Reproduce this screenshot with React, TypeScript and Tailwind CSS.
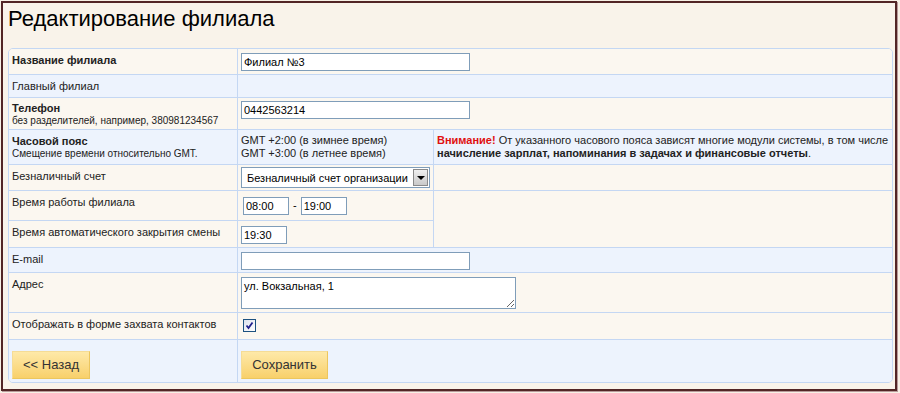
import React from 'react';

const inputCls =
  'h-[18px] border border-[#7f9db9] bg-white px-[2px] text-[11px] leading-[14px] text-black outline-none';

const Label = ({ children, bold }: { children: React.ReactNode; bold?: boolean }) => (
  <div className={bold ? 'font-bold' : ''}>{children}</div>
);

export default function App() {
  return (
    <div className="h-[393px] w-[900px] bg-[#f7f0e5] p-px font-['Liberation_Sans',Arial,sans-serif] text-[11px] leading-[14px] text-[#222]">
      <div className="h-[390px] w-[896px] border-2 border-[#522525] bg-[#f9f3ea] shadow-[1px_1px_0_#b89a9a]">
        <h1 className="mt-[3px] ml-[5px] text-[22px] leading-[26px] text-black">Редактирование филиала</h1>

        <div className="mt-[16px] ml-[5px] w-[885px] overflow-hidden rounded-[5px] border border-[#c4d7f3]">
          {/* Название */}
          <div className="flex h-[26px] border-b border-[#c4d7f3] bg-[#fbf7f0]">
            <div className="w-[229px] border-r border-[#c4d7f3] pl-[3px] pt-[4px]">
              <Label bold>Название филиала</Label>
            </div>
            <div className="pl-[3px] pt-[4px]">
              <input className={`${inputCls} w-[229px]`} defaultValue="Филиал №3" />
            </div>
          </div>

          {/* Главный */}
          <div className="flex h-[23px] border-b border-[#c4d7f3] bg-[#edf3fd]">
            <div className="w-[229px] border-r border-[#c4d7f3] pl-[3px] pt-[4px]">Главный филиал</div>
            <div className="flex-1" />
          </div>

          {/* Телефон */}
          <div className="flex h-[32px] border-b border-[#c4d7f3] bg-[#fbf7f0]">
            <div className="w-[229px] border-r border-[#c4d7f3] pl-[3px] pt-[3px]">
              <Label bold>Телефон</Label>
              <div className="text-[10px] leading-[12px]">без разделителей, например, 380981234567</div>
            </div>
            <div className="pl-[3px] pt-[3px]">
              <input className={`${inputCls} w-[229px]`} defaultValue="0442563214" />
            </div>
          </div>

          {/* Часовой пояс */}
          <div className="flex h-[35px] border-b border-[#c4d7f3] bg-[#edf3fd]">
            <div className="w-[229px] border-r border-[#c4d7f3] pl-[3px] pt-[4px]">
              <Label bold>Часовой пояс</Label>
              <div className="text-[10px] leading-[12px]">Смещение времени относительно GMT.</div>
            </div>
            <div className="w-[196px] border-r border-[#c4d7f3] pl-[3px] pt-[4px] leading-[13px]">
              <div>GMT +2:00 (в зимнее время)</div>
              <div>GMT +3:00 (в летнее время)</div>
            </div>
            <div className="flex-1 pl-[3px] pt-[4px] leading-[13px]">
              <span className="font-bold text-[#e01010]">Внимание!</span> От указанного часового пояса зависят многие
              модули системы, в том числе <b>начисление зарплат, напоминания в задачах и финансовые отчеты</b>.
            </div>
          </div>

          {/* Счет + время работы */}
          <div className="flex border-b border-[#c4d7f3] bg-[#fbf7f0]">
            <div className="w-[425px] border-r border-[#c4d7f3]">
              <div className="flex h-[26px] border-b border-[#c4d7f3]">
                <div className="w-[229px] border-r border-[#c4d7f3] pl-[3px] pt-[4px]">Безналичный счет</div>
                <div className="pl-[3px] pt-[2px]">
                  <div className="flex h-[21px] w-[189px] items-center border border-[#7f9db9] bg-white pl-[5px] pr-px">
                    <span className="flex-1 whitespace-nowrap text-black">Безналичный счет организации</span>
                    <div className="flex h-[17px] w-[15px] items-center justify-center border border-[#8a8a8a] bg-gradient-to-b from-[#f0f0f0] to-[#c9c9c9]">
                      <div className="h-0 w-0 border-x-[4px] border-t-[4px] border-x-transparent border-t-black" />
                    </div>
                  </div>
                </div>
              </div>
              <div className="flex h-[30px] border-b border-[#c4d7f3]">
                <div className="w-[229px] border-r border-[#c4d7f3] pl-[3px] pt-[4px]">Время работы филиала</div>
                <div className="flex items-start gap-[4px] pl-[5px] pt-[6px]">
                  <input className={`${inputCls} w-[46px]`} defaultValue="08:00" />
                  <span className="pt-[1px] text-black">-</span>
                  <input className={`${inputCls} w-[46px]`} defaultValue="19:00" />
                </div>
              </div>
              <div className="flex h-[26px]">
                <div className="w-[229px] border-r border-[#c4d7f3] pl-[3px] pt-[4px]">Время автоматического закрытия смены</div>
                <div className="pl-[3px] pt-[5px]">
                  <input className={`${inputCls} w-[46px]`} defaultValue="19:30" />
                </div>
              </div>
            </div>
            <div className="flex-1">
              <div className="h-[26px] border-b border-[#c4d7f3]" />
              <div className="h-[56px]" />
            </div>
          </div>

          {/* E-mail */}
          <div className="flex h-[25px] border-b border-[#c4d7f3] bg-[#edf3fd]">
            <div className="w-[229px] border-r border-[#c4d7f3] pl-[3px] pt-[4px]">E-mail</div>
            <div className="pl-[3px] pt-[4px]">
              <input className={`${inputCls} w-[229px]`} defaultValue="" />
            </div>
          </div>

          {/* Адрес */}
          <div className="flex h-[40px] border-b border-[#c4d7f3] bg-[#fbf7f0]">
            <div className="w-[229px] border-r border-[#c4d7f3] pl-[3px] pt-[4px]">Адрес</div>
            <div className="pl-[3px] pt-[4px]">
              <textarea
                className="block h-[32px] w-[275px] resize border border-[#7f9db9] bg-white px-[2px] pt-px text-[11px] leading-[14px] text-black outline-none"
                defaultValue="ул. Вокзальная, 1"
              />
            </div>
          </div>

          {/* Отображать */}
          <div className="flex h-[27px] border-b border-[#c4d7f3] bg-[#fbf7f0]">
            <div className="w-[229px] border-r border-[#c4d7f3] pl-[3px] pt-[4px]">Отображать в форме захвата контактов</div>
            <div className="pl-[5px] pt-[6px]">
              <div className="flex h-[13px] w-[13px] items-center justify-center border border-[#1c5180] bg-gradient-to-br from-[#dde3ee] to-white">
                <svg width="9" height="9" viewBox="0 0 9 9">
                  <path d="M1.5 4.5 L3.5 7 L7.5 1.5" fill="none" stroke="#21218c" strokeWidth="1.8" />
                </svg>
              </div>
            </div>
          </div>

          {/* Кнопки */}
          <div className="flex h-[42px] bg-[#edf3fd]">
            <div className="w-[229px] border-r border-[#c4d7f3] pl-[3px] pt-[11px]">
              <button className="h-[28px] w-[78px] border border-[#f5dc96] border-b-[#ecc65e] border-r-[#ecc65e] bg-gradient-to-b from-[#fee9a8] to-[#f8d06a] text-[13px] text-[#333]">
                &lt;&lt; Назад
              </button>
            </div>
            <div className="pl-[3px] pt-[11px]">
              <button className="h-[28px] w-[87px] border border-[#f5dc96] border-b-[#ecc65e] border-r-[#ecc65e] bg-gradient-to-b from-[#fee9a8] to-[#f8d06a] text-[13px] text-[#333]">
                Сохранить
              </button>
            </div>
          </div>
        </div>
      </div>
    </div>
  );
}
